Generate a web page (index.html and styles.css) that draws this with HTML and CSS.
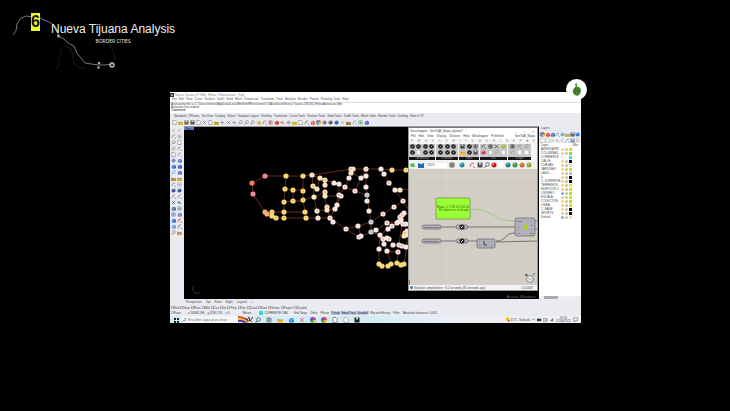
FILE: index.html
```html
<!DOCTYPE html>
<html lang="en">
<head>
<meta charset="utf-8">
<title>Nueva Tijuana Analysis</title>
<link rel="stylesheet" href="styles.css">
</head>
<body>
<header class="head">
  <svg class="route" viewBox="0 0 130 80" aria-hidden="true">
    <path class="faint" d="M55 70l4-5 -1-5 3-6 -1-4 5-4 5 2 3 7 1 8 4 4 8 2M117 18l-5 8 -2 9 -2 7 5 9 2 9"/>
    <path class="line" d="M13 35l3-4 1-7 3-5 6-3 6 1 6-1 4 3 7 3 5 3 4 6v5l6 3 4 4 6 3 3 7 4 5 4 5 6 1 8 1 6 0 8-1"/>
    <circle class="dot" cx="58.500" cy="36" r="1.500"/><circle class="dot" cx="99" cy="63" r="1.300"/><circle class="dot" cx="98.500" cy="67.500" r="1.300"/>
    <circle class="ring" cx="112" cy="65" r="2"/>
  </svg>
  <span class="num">6</span>
  <div class="titles"><h1>Nueva Tijuana Analysis</h1><p>BORDER CITIES</p></div>
</header>
<main class="stage">
  <section class="app" aria-label="Rhino">
    <div class="caption"><svg viewBox="0 0 8 8"><path d="M0 0h8v8H0z" fill="#333"/><path d="M1 2l3 1 3 3H3z" fill="#bbb"/></svg><span>Nueva Tijuana (17 MB) - Rhino 7 Educational - [Top]</span></div>
    <nav class="menu" id="menu"></nav>
    <div class="command"><p>Autosaving file as C:\Users\lenovo\AppData\Local\McNeel\Rhinoceros\7.0\AutoSave\Nueva Tijuana (33592)-RhinoAutosave.3dm</p><p>Autosave succeeded</p><label>Command: <input type="text"></label></div>
    <nav class="tabs" id="tabs"></nav>
    <div class="tools" id="tools"></div>
    <div class="work">
      <aside class="side" id="side"></aside>
      <div class="view">
        <button class="top">Top ▾</button>
        <svg class="graph" viewBox="184 126 355 172" preserveAspectRatio="xMinYMin meet">
          <path class="edge" d="M265 175L252 182 253 193 265 211 272 216 276 217H330L346 228 359 236 371 231 376 229 388 222 398 220 410 211M265 175H286L303 175 312 174 352 168H366L381 168 392 169H410M286 175L285 188 284 201V217M285 188L293 189H303M293 189V200L284 201M293 200H303M303 175V190L303 199 305 211 306 217M266 211H284M305 211H284M312 174L313 185 317 188 320 177 325 179V196L327 208 330 217M312 174L320 177M313 185L314 196 317 210 318 217M303 199L314 196 325 192M325 179L334 182 339 183V194L335 208 330 217M325 195L340 195 337 204M317 210L335 208M339 194L345 186 351 172 352 168M339 183L345 186 355 190 367 194M352 172L361 177 366 168V186L368 200 369 210 371 221 371 231M361 177L355 190M381 168L384 173 389 182 395 189 403 200 409 209M395 189L410 188M403 200L394 206 383 213 371 221M346 228L358 225 371 221M358 225L361 235M371 231L380 234 388 228 403 218M380 234L383 238 389 238 393 244H407M380 234L379 248V263L388 265 397 262 404 263M384 243L387 250 398 251 397 262M387 250L391 262M389 238L384 243M403 216L399 244 398 251M403 216L407 232V245L404 263M392 225L397 222 410 222"/>
          <path class="node yellow" d="M284 201h0M285 188h0M286 175h0M293 189h0M293 200h0M303 190h0M303 175h0M303 199h0M284 211h0M284 217h0M276 217h0M272 211h0M272 215h0M305 211h0M306 217h0M379 263h0M382 265h0M388 265h0M391 263h0M397 262h0M401 264h0M404 263h0M392 169h0M406 169h0"/>
          <path class="node cream" d="M312 174h0M313 185h0M317 188h0M320 177h0M325 179h0M325 184h0M325 191h0M325 195h0M327 206h0M327 209h0M314 196h0M400 189h0M351 168h0M353 168h0M351 172h0M405 232h0M406 234h0M404 235h0M407 230h0"/>
          <path class="node pale" d="M317 210h0M318 217h0M330 217h0M334 182h0M339 183h0M339 194h0M341 195h0M337 204h0M335 208h0M333 221h0M346 228h0M358 225h0M359 236h0M361 235h0M345 186h0M349 177h0M361 177h0M355 190h0M366 168h0M366 175h0M366 186h0M367 200h0M369 210h0M376 229h0M383 213h0M394 206h0M403 200h0M395 189h0M389 182h0M384 173h0M381 168h0M387 222h0M388 228h0M392 225h0M397 222h0M380 234h0M383 238h0M387 237h0M389 238h0M384 243h0M393 244h0M399 244h0M402 245h0M406 246h0M379 248h0M387 250h0M398 251h0M400 216h0M402 214h0M404 212h0M401 219h0M403 223h0M406 223h0M398 221h0"/>
          <path class="node blue" d="M367 194h0M371 221h0M371 231h0"/>
          <path class="core" d="M317 210h0M330 217h0M339 194h0M341 195h0M346 228h0M359 236h0M345 186h0M355 190h0M366 168h0M367 194h0M371 221h0M371 231h0M383 213h0M394 206h0M403 200h0M389 182h0M387 222h0M392 225h0M383 238h0M389 238h0M399 244h0M402 245h0M400 216h0M402 214h0M403 223h0M405 232h0M327 206h0M398 251h0M351 168h0"/>
          <path class="core gold" d="M284 201h0M285 188h0M293 189h0M293 200h0M272 211h0M276 217h0M284 217h0M303 190h0M303 199h0M325 191h0M313 185h0M325 179h0"/>
          <path class="node orange" d="M265 211h0M267 213h0"/><path class="node coral" d="M252 182h0"/><path class="node pink" d="M265 175h0M253 193h0"/>
          <path d="M193 285v5l2 2h5" fill="none" stroke="#333"/>
        </svg>
        <p class="watermark">Activar Windows</p>
        <section class="gh" aria-label="Grasshopper">
          <div class="ghcap"><span>Grasshopper - GenTijAl_Mapa_dijuana*</span><span class="wbtn"><button aria-label="Minimize">–</button><button aria-label="Maximize">□</button><button aria-label="Close">×</button></span></div>
          <nav class="ghmenu" id="ghmenu"></nav>
          <nav class="ghtabs" id="ghtabs"></nav>
          <div class="ribbon" id="ribbon"></div>
          <div class="ghbar"><button aria-label="Open"><svg viewBox="0 0 6 6"><path d="M0 2l4-1 1 4H1z" fill="#4bc838"/></svg></button><button aria-label="Save"><svg viewBox="0 0 6 6"><path d="M0 1h6v5H0z" fill="#2768b6"/><path d="M1 1h4v1H1z" fill="#bde"/></svg></button><select aria-label="Zoom"><option>135%</option></select><span id="ghleft"></span><span class="push" id="ghright"></span></div>
          <svg class="canvas" viewBox="410 169 128 116" preserveAspectRatio="xMinYMin slice">
            <path d="M442 169v116M473 169v116M505 169v116M410 183h128M410 214h128M410 245h128M410 276h128" stroke="#c6c1b9" stroke-width=".5"/>
            <path d="M472 209C495 209 493 221 516 221" class="wire green"/><path d="M442 227H516M442 241H478M497 241C508 241 505 233 516 233M497 242L538 241M536 221h2M536 229h2" class="wire"/>
            <rect x="437" y="198" width="34" height="21" rx="1" fill="#9bff35" stroke="#7ea84d"/>
            <text x="438" y="208" class="green-text">Mapa_1.TIJN 00:100.00</text><text x="440" y="211" class="green-text">El reporte es inclinado</text>
            <g class="part"><rect x="423" y="225" width="19" height="4" rx="2"/><rect x="423" y="239" width="19" height="4" rx="2"/><rect x="457" y="225" width="12" height="4" rx="2"/><rect x="457" y="239" width="12" height="4" rx="2"/><rect x="478" y="239" width="18" height="9" rx="1"/><rect x="516" y="218" width="20" height="18" rx="2"/></g>
            <circle cx="463" cy="227" r="2.500" fill="#222"/><circle cx="463" cy="241" r="2.500" fill="#222"/><path d="M462 228l2-2M462 242l2-2" stroke="#eee"/>
            <path d="M485 241v4h3" stroke="#222" stroke-width=".8" fill="none"/><path d="M524 225l3-1 2 2v3l-3 1-2-2z" fill="#a4cf24"/><path d="M532 236h3l-1 2h-2z" fill="#a4df24"/>
            <g class="part-text"><text x="425" y="228">Dynamic Pipeline</text><text x="425" y="242">Dynamic Curves</text><text x="518" y="222">Mesh</text><text x="519" y="228">P</text><text x="519" y="234">C</text><text x="532" y="222">F</text><text x="532" y="226">D</text><text x="532" y="230">L</text><text x="531" y="234">Box</text><text x="480" y="242">C</text><text x="480" y="246">N</text><text x="492" y="242">L</text><text x="492" y="246">P</text></g>
            <circle cx="531" cy="279" r="3.500" fill="#e4e4e4" stroke="#777" stroke-width=".8"/><path d="M527 276v-2M526 275h3M534 275l2-2" stroke="#333" stroke-width=".8"/><path d="M529 278l2 2 2-2" stroke="#999" stroke-width=".6" fill="none"/>
            <path d="M410 280v5" stroke="#222"/>
          </svg>
          <div class="ghstatus"><span><i></i>Solution completed in ~3.2 seconds (35 seconds ago)</span><span>1.0.0007</span></div>
        </section>
      </div>
      <aside class="layers">
        <h2>Layers</h2><div class="lt" id="lt"></div><div class="lt dim" id="lt2"></div>
        <table><thead><tr><th>Layer</th><th></th><th></th><th></th><th>Mat</th></tr></thead><tbody id="rows"></tbody></table>
        <div class="scroll"><i></i></div>
      </aside>
    </div>
    <nav class="vtabs"><a href="#">Perspective</a><a href="#">Top</a><a href="#">Front</a><a href="#">Right</a><a href="#">Layout1</a><a href="#">+</a></nav>
    <div class="snaps" id="snaps"></div>
    <div class="status"><span>CPlane</span><span>x 24466.596</span><span>y 4290.745</span><span>z 0</span><span>Meters</span><span class="layer"><i></i>CURRENTE VIAL</span><span>Grid Snap</span><span>Ortho</span><span>Planar</span><b>Osnap</b><b>SmartTrack</b><b>Gumball</b><span>Record History</span><span>Filter</span><span>Absolute tolerance: 0.001</span></div>
    <div class="taskbar">
      <button aria-label="Start"><svg viewBox="0 0 6 6"><path d="M1 1h2v2H1zM4 1h2v2H4zM1 4h2v2H1zM4 4h2v2H4z" fill="#123"/></svg></button>
      <label class="search"><svg viewBox="0 0 6 6"><path d="M1 5l2-2M3 3a1 1 0 1 0 0-1" fill="none" stroke="#555" stroke-width=".6"/></svg><input type="search" placeholder="Escribe aquí para buscar" aria-label="Search"></label>
      <svg class="rainbow" viewBox="0 0 16 7"><path d="M0 1q5 0 10 4" stroke="#e64a2d" stroke-width="2" fill="none"/><path d="M0 3q5 0 9 3" stroke="#f7c42d" stroke-width="1.500" fill="none"/><path d="M0 5q4-1 8 2" stroke="#5635b5" stroke-width="2" fill="none"/><path d="M7 2l2 2 2-3 1 4 3-4M9 6l3-2 2 2" stroke="#5b3433" fill="none"/></svg>
      <div class="pins" id="pins"></div>
      <div class="tray"><svg viewBox="0 0 6 6"><circle cx="3" cy="2.500" r="2.300" fill="#fbbd24"/><circle cx="4.500" cy="4.500" r="1.200" fill="#e2452f"/></svg><span>15°C&nbsp; Soleado</span><svg viewBox="0 0 6 6"><path d="M1 4l2-2 2 2" fill="none" stroke="#555" stroke-width=".7"/></svg><svg viewBox="0 0 6 6"><path d="M0 2h5v3H0z" fill="#333"/></svg><svg viewBox="0 0 6 6"><path d="M0 2h4v3H0zM5 2v3" fill="none" stroke="#555" stroke-width=".7"/></svg><svg viewBox="0 0 6 6"><path d="M1 5l4-4v4z" fill="#777"/></svg><time>15:51<br>17/06/2022</time><svg viewBox="0 0 6 6"><path d="M.5 1h5v3.500H3L2 6V4.500H.5z" fill="none" stroke="#555" stroke-width=".6"/></svg></div>
    </div>
  </section>
  <div class="badge"><svg viewBox="0 0 21 21"><path d="M10 9L9 5l2-1 0 4" fill="#5a8b38"/><path d="M7 11q1-3 3-3 4-1 5 3 0 3-2 5l-2 1-2-1q-3-2-2-5z" fill="#4d8d2f"/><path d="M9.500 8v8M12 8v8M7 12h8" stroke="#2f6928" stroke-width=".7"/></svg></div>
</main>
<script src="app.js"></script>
</body>
</html>
```

FILE: styles.css
```css
* { box-sizing: border-box; }
body { margin: 0; min-height: 100vh; background: #000; color: #fff; font-family: "Liberation Sans", Arial, sans-serif; }
h1, h2, p { margin: 0; font-weight: normal; }
button, input, select { margin: 0; padding: 0; border: 0; background: none; font: inherit; color: inherit; }
a { color: inherit; text-decoration: none; }
button { display: flex; align-items: center; justify-content: center; }

.head { position: relative; display: flex; align-items: flex-start; gap: 11px; height: 92px; padding: 13px 0 0 31px; }
.route { position: absolute; left: 0; top: 0; width: 130px; height: 80px; fill: none; }
.route .line { stroke: #777; stroke-width: 1; }
.route .faint { stroke: #1b1b1b; }
.route .dot { fill: #aaa; }
.route .ring { stroke: #bbb; stroke-width: 1.5; }
.num { position: relative; width: 9px; background: #e8fa28; color: #111; font-size: 16px; font-weight: bold; line-height: 18px; text-align: center; }
.titles { position: relative; padding-top: 9px; }
.titles h1 { font-size: 12px; line-height: 15px; color: #eee; }
.titles p { font-family: "Open Sans", sans-serif; font-size: 5px; line-height: 9px; text-align: center; color: #eee; }

.stage { position: relative; margin: 0 149px 0 170px; }
.badge { position: absolute; right: -6px; top: -13px; width: 21px; height: 21px; border-radius: 50%; background: #fff; }
.badge svg { display: block; }
.app { display: flex; flex-direction: column; background: #e9ebf0; color: #444; font-size: 3px; line-height: 4px; white-space: nowrap; }
.caption { display: flex; align-items: center; gap: 1px; height: 5px; background: #fff; color: #888; }
.caption svg { width: 4px; height: 4px; }
.menu { display: flex; gap: 2px; height: 5px; padding: 0 2px; background: #fff; color: #555; }
.command { height: 11px; padding-left: 1px; background: #fff; border-top: 1px solid #ddd; line-height: 3px; }
.command label { display: flex; gap: 2px; color: #111; }
.command input { flex: 1; height: 3px; }
.tabs { display: flex; gap: 2px; height: 5px; padding: 0 4px; margin-top: 1px; }
.tools { display: flex; gap: 1px; height: 6px; padding-left: 2px; }
.tools svg, .side svg { display: block; width: 5px; height: 5px; }
.work { display: grid; grid-template-columns: 14px 1fr 42px; margin-top: 1px; }
.side { display: grid; grid-template-columns: 5px 5px; grid-auto-rows: 5px; gap: 1px; padding: 2px 0 0 1px; align-content: start; }

.view { position: relative; background: #000; border-top: 1px solid #999; }
.top { position: absolute; left: 0; top: 0; width: 10px; height: 3px; background: #6788d7; color: #223; }
.graph { display: block; width: 100%; }
.edge { fill: none; stroke: #7d3520; stroke-width: .8; }
.node { stroke-width: 5.2; stroke-linecap: round; }
.core { stroke: #f1ab93; stroke-width: 2; stroke-linecap: round; }
.gold { stroke: #efb83e; }
.yellow { stroke: #f5d877; }
.cream { stroke: #f8e5bd; }
.pale { stroke: #f7e6e1; }
.blue { stroke: #b9d0e7; }
.orange { stroke: #f5ad70; }
.coral { stroke: #f77e4c; }
.pink { stroke: #f28b99; }
.watermark { position: absolute; right: 3px; bottom: 0; font-size: 4px; line-height: 5px; color: #666; }

.gh { position: absolute; right: 1px; top: 0; width: 130px; display: flex; flex-direction: column; background: #f4f4f4; border: 1px solid #999; border-top-color: #777; }
.ghcap { display: flex; justify-content: space-between; height: 6px; padding: 1px 3px 0 1px; background: #fff; }
.wbtn { display: flex; gap: 7px; }
.ghmenu { display: flex; gap: 3px; height: 5px; padding: 0 2px; background: #fff; }
.ghmenu a:last-child { margin-left: auto; }
.ghtabs { display: flex; justify-content: space-between; height: 4px; padding: 0 2px; color: #888; }
.ribbon { display: flex; gap: 1px; height: 18px; padding: 1px 5px 1px 0; }
.group { display: flex; flex-direction: column; justify-content: space-between; background: #c8c8c8; }
.group div { display: grid; grid-template-rows: 6px 6px; grid-auto-flow: column; justify-content: space-evenly; }
.group svg { display: block; width: 5px; height: 5px; }
.group span { height: 3px; line-height: 3px; background: #161616; color: #999; text-align: center; }
.ghbar { display: flex; align-items: center; gap: 2px; height: 8px; padding: 0 5px 0 1px; background: #f0f1f2; }
.ghbar svg { display: block; width: 6px; height: 6px; }
.ghbar select { width: 29px; height: 5px; margin-left: 1px; background: #fff; appearance: none; }
.ghbar span { display: flex; gap: 4px; }
.ghbar .push { margin-left: auto; gap: 1px; }
.canvas { display: block; width: 100%; background: #d3cec6; }
.wire { fill: none; stroke: #686868; stroke-width: .9; }
.wire.green { stroke: #9bc77d; }
.green-text { font-size: 3px; fill: #386812; }
.part { fill: #b1b1bd; stroke: #666; stroke-width: .7; }
.part-text { font-size: 2px; fill: #222; }
.ghstatus { display: flex; justify-content: space-between; align-items: center; height: 5px; padding: 0 4px 0 1px; }
.ghstatus span { display: flex; gap: 1px; }
.ghstatus i { width: 3px; height: 3px; border-radius: 50%; background: #287dcc; }

.layers { display: flex; flex-direction: column; background: #fff; }
.layers h2 { padding: 1px 2px; font-size: 3px; line-height: 3px; background: #e9ebf0; }
.lt { display: flex; height: 6px; padding-left: 1px; background: #e9ebf0; }
.lt svg { display: block; width: 5px; height: 5px; }
.dim { opacity: .65; }
.layers table { width: 100%; border-collapse: collapse; table-layout: fixed; }
.layers th, .layers td { height: 4px; padding: 0; line-height: 4px; font-weight: normal; text-align: left; }
.layers th { width: 4px; }
.layers th:first-child { width: 22px; }
.layers th:last-child { width: 8px; }
.layers td:first-child, .layers th:first-child { padding-left: 2px; }
.layers td svg, .layers td i { display: block; width: 3px; height: 3px; }
.scroll { height: 3px; margin-top: auto; padding-left: 5px; background: #eee; }
.scroll i { display: block; width: 14px; height: 3px; background: #aaa; }

.vtabs { display: flex; gap: 4px; height: 6px; padding: 1px 0 0 16px; }
.snaps { display: flex; gap: 1px; height: 5px; padding-left: 1px; }
.snaps label { display: flex; align-items: center; gap: 0; }
.snaps input { width: 3px; height: 3px; appearance: none; border: 1px solid #aaa; background: #fff; }
.status { display: flex; gap: 3px; height: 6px; padding: 1px; }
.status span:nth-child(-n+5) { min-width: 14px; }
.status b { font-weight: normal; background: #bdcbe8; color: #222; margin: 0 -1px; }
.status .layer { display: flex; gap: 1px; min-width: 31px; }
.layer i { width: 4px; height: 4px; background: #2bdce2; }
.taskbar { display: flex; align-items: center; height: 7px; background: linear-gradient(90deg, #d4e9ef, #d3edf5 50%, #eef0f5 70%); }
.taskbar svg { display: block; width: 6px; height: 6px; }
.taskbar > button { width: 11px; }
.search { display: flex; align-items: center; gap: 1px; width: 57px; height: 7px; background: #f3f7f8; }
.search input { width: 48px; height: 6px; font-size: 4px; }
.search input::placeholder { color: #777; opacity: 1; }
.taskbar .rainbow { width: 16px; height: 7px; }
.pins { display: flex; gap: 5px; padding-left: 1px; }
.tray { display: flex; align-items: center; gap: 1px; margin-left: auto; padding-right: 3px; }
.tray svg { width: 5px; height: 5px; }
.tray time { text-align: center; line-height: 3px; padding: 0 1px; }
```

FILE: app.js
```js
const $ = id => document.getElementById(id);
const links = (id, names) => { $(id).innerHTML = names.split('|').map(n => `<a href="#">${n}</a>`).join(''); };

links('menu', 'File|Edit|View|Curve|Surface|SubD|Solid|Mesh|Dimension|Transform|Tools|Analyze|Render|Panels|Paneling Tools|Help');
links('tabs', 'Standard|CPlanes|Set View|Display|Select|Viewport Layout|Visibility|Transform|Curve Tools|Surface Tools|Solid Tools|SubD Tools|Mesh Tools|Render Tools|Drafting|New in V7');
links('ghmenu', 'File|Edit|View|Display|Solution|Help|Metahopper|Pufferfish|GenTijAl_Mapa');
links('ghtabs', 'P|M|S|V|C|S|M|I|T|D|W|K|H|L|B|E|P|A|F');

const shapes = {
  page: c => `<path d="M1 .5h3l1 1v4H1z" fill="#fff" stroke="${c}" stroke-width=".7"/>`,
  folder: c => `<path d="M0 2h2l1 1h3v3H0z" fill="${c}"/><path d="M1 3h5" stroke="#665" stroke-width=".5"/>`,
  disk: c => `<path d="M.5.5h5v5h-5z" fill="${c}"/><path d="M2 .5h2v2H2z" fill="#ddd"/>`,
  cross: c => `<path d="M1 1l4 4M5 1L1 5" stroke="${c}" stroke-width=".8"/>`,
  arrow: c => `<path d="M5 5q0-3-4-2M3 1L1 3l2 2" fill="none" stroke="${c}" stroke-width=".8"/>`,
  lens: c => `<circle cx="3.5" cy="2.5" r="1.8" fill="none" stroke="${c}" stroke-width=".7"/><path d="M2 4L.5 5.5" stroke="${c}"/>`,
  ball: c => `<circle cx="3" cy="3" r="2.5" fill="${c}"/><circle cx="2.300" cy="2" r=".8" fill="#fff" opacity=".7"/>`,
  dark: c => `<circle cx="3" cy="3" r="2.800" fill="#222"/><path d="M2 4l2-2" stroke="${c}" stroke-width=".8"/>`,
  box: c => `<path d="M1 2l3-1 2 1v3l-3 1-2-1z" fill="${c}"/><path d="M1 2l2 1 3-1M3 3v3" stroke="#eef" fill="none" stroke-width=".4"/>`,
  curve: c => `<path d="M1 5q0-4 4-4M4 4l2 2" fill="none" stroke="${c}" stroke-width=".8"/>`,
  grid: c => `<path d="M1 1h4v4H1zM3 1v4M1 3h4" fill="none" stroke="${c}" stroke-width=".7"/>`,
  wheel: () => '<path d="M3 3V0a3 3 0 0 1 3 3z" fill="#e44"/><path d="M3 3h3a3 3 0 0 1-3 3z" fill="#eb3"/><path d="M3 3v3a3 3 0 0 1-3-3z" fill="#3a6"/><path d="M3 3H0a3 3 0 0 1 3-3z" fill="#55d"/>'
};
const icon = spec => { const [n, c = '#777'] = spec.split(':'); return `<svg viewBox="0 0 6 6" aria-hidden="true">${shapes[n](c)}</svg>`; };
const icons = (id, list) => { $(id).innerHTML = list.split(' ').map(s => `<button>${icon(s)}</button>`).join(''); };

icons('tools', 'page folder:#e5b93a disk:#776c30 disk:#555 page cross page folder:#caa72c arrow cross arrow lens lens lens box:#c8b648 curve:#a44 grid:#a55 box:#c33 arrow:#c33 ball:#aaa folder:#e7bd36 page curve:#555 box:#e35b30 wheel ball:#777 ball:#555 ball:#3556b5 cross:#c93 folder:#987f4b curve grid:#5a5 box:#4957cf');
icons('side', 'cross:#aaa curve:#aaa curve grid:#aaa lens page grid:#aaa curve page curve ball:#668ac8 box:#597cc9 box:#2d67cd box:#3155bd lens:#6d98d9 box:#496fc4 folder:#d28e39 folder:#f0a62c curve grid:#aaa ball:#44558c ball:#3357a6 curve curve cross:#257 arrow:#27548a box:#476699 grid:#68a grid:#577ab4 box:#687fb8 box:#2866cc curve:#a33 box:#679ad1 curve:#555 lens:#876 folder:#c6a65d');
icons('lt', 'wheel box:#d44530 box:#4267bd curve:#887 ball:#86afc7 folder:#d3b84f disk:#667 ball:#2278d5');
icons('lt2', 'page page cross arrow curve curve:#555 disk:#3556a7 lens');
icons('ghleft', 'grid:#333 ball:#34889c curve:#c34');
icons('ghright', 'disk:#555 lens:#444 ball:#c51f1f page:#fff ball:#168985 ball:#369653 ball:#d36b31 ball:#8ca935');
icons('pins', 'lens:#444 grid:#567 folder:#efc43a box:#1d8be2 cross:#e55b75 wheel wheel page:#666 page:#999 disk:#222');

const groups = [
  [26, 'Geometry', 'dark:#ddd dark:#ddd dark:#ddd page:#c8c8c8 dark:#ddd dark:#ddd dark:#ddd dark:#ddd'],
  [22, 'Primitive', 'dark:#ddd dark:#ddd dark:#ddd dark:#ddd dark:#ddd dark:#ddd'],
  [20, 'Input', 'disk:#444 folder:#fb2 dark:#ddd dark:#ddd grid:#444 disk:#555'],
  [27, 'Util', 'curve:#333 ball:#c34 grid:#333 page:#aaa cross:#333 lens:#999 ball:#92bd22 page:#ccc'],
  [23, 'Graph', 'grid:#333 curve:#999 curve:#777 page:#ccc lens:#888 page:#ccc']
];
$('ribbon').innerHTML = groups.map(([w, n, l]) => `<div class="group" style="width:${w}px"><div>${l.split(' ').map(icon).join('')}</div><span>${n}</span></div>`).join('');

const layers = [['AVENIDA PR..', '#c6e51b'], ['COLUMNAS..', '#85e51b'], ['CORRIENTE', '#23e5e5'], ['CALLE', '#111'], ['CURVAS', '#ddd'], ['JARDINES', '#c6e51b'], ['LAGO', '#aab6ed'], ['0', '#111'], ['C. SUPERIOR', '#111'], ['TERRENOS..', '#ebe91b'], ['EDIFICIOS 2', '#cce51b'], ['LINDERO', '#a3e51b'], ['ESCALA', '#d2e51b'], ['COLECTOR..', '#a8df26'], ['LINEA', '#cce51b'], ['C. BASE', '#111'], ['SPORTS', '#111'], ['Default', '#ddd']];
$('rows').innerHTML = layers.map(([n, c], i) => `<tr><td>${n}</td><td>${i === 2 ? '✓' : icon('ball:' + (i === 11 || i === 17 ? '#498bd8' : '#e9bd58'))}</td><td>${i === 2 ? '' : icon('disk:#d6b56d')}</td><td><i style="background:${c}"></i></td><td></td></tr>`).join('');

$('snaps').innerHTML = 'End|Near|Point|Mid|Cen|Int|Perp|Tan|Quad|Knot|Vertex|Project|Disable'.split('|').map(n => `<label><input type="checkbox">${n}</label>`).join('');
```
